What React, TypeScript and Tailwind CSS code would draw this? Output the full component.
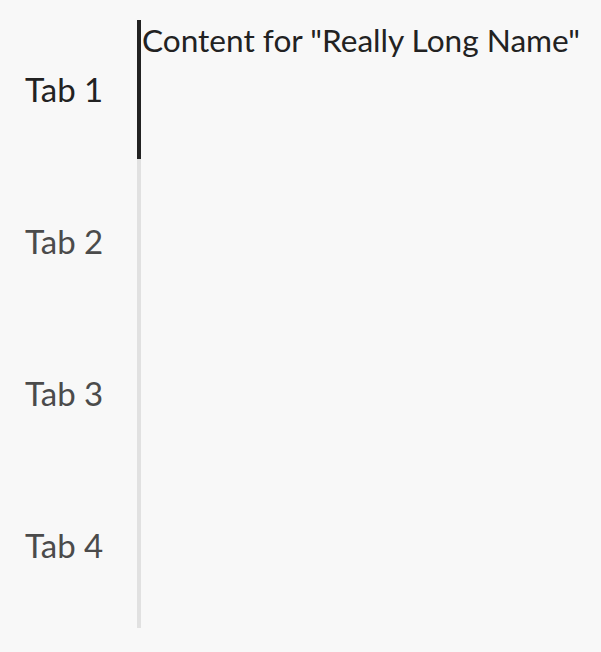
const tabs = ['Tab 1', 'Tab 2', 'Tab 3', 'Tab 4'];

export default function App() {
  const selected = 0;
  return (
    <div
      className="min-h-[652px] w-full bg-[#f8f8f8] pt-5"
      style={{ fontFamily: 'Lato, "Noto Sans", sans-serif' }}
    >
      <div className="flex items-start">
        <div role="tablist" className="flex w-[141px] flex-col border-r-4 border-[#e1e1e1]">
          {tabs.map((tab, i) => (
            <div
              key={tab}
              role="tab"
              className={`relative mb-[13px] flex h-[139px] items-center pl-[25px] text-[33px] ${
                i === selected ? 'text-[#222222]' : 'text-[#4b4b4b]'
              }`}
            >
              {tab}
              {i === selected && (
                <div className="absolute -right-1 top-0 h-full w-1 bg-[#222222]" />
              )}
            </div>
          ))}
        </div>
        <div className="pl-px text-[31.6px] leading-[41px] text-[#222222]">
          Content for "Really Long Name"
        </div>
      </div>
    </div>
  );
}
